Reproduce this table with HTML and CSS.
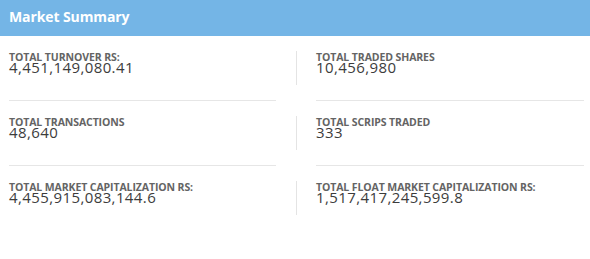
FILE: index.html
```html
<!DOCTYPE html>
<html>
<head>
<meta charset="utf-8">
<link rel="stylesheet" href="styles.css">
</head>
<body>
<div class="panel">
  <div class="panel-head">Market Summary</div>
  <div class="grid">
    <div class="cell">
      <div class="stat">
        <div class="label">TOTAL TURNOVER RS:</div>
        <div class="value">4,451,149,080.41</div>
      </div>
      <div class="sep"></div>
    </div>
    <div class="cell right">
      <div class="stat">
        <div class="label">TOTAL TRADED SHARES</div>
        <div class="value">10,456,980</div>
      </div>
      <div class="sep"></div>
    </div>
    <div class="cell">
      <div class="stat">
        <div class="label">TOTAL TRANSACTIONS</div>
        <div class="value">48,640</div>
      </div>
      <div class="sep"></div>
    </div>
    <div class="cell right">
      <div class="stat">
        <div class="label">TOTAL SCRIPS TRADED</div>
        <div class="value">333</div>
      </div>
      <div class="sep"></div>
    </div>
    <div class="cell">
      <div class="stat">
        <div class="label">TOTAL MARKET CAPITALIZATION RS:</div>
        <div class="value">4,455,915,083,144.6</div>
      </div>
    </div>
    <div class="cell right">
      <div class="stat">
        <div class="label">TOTAL FLOAT MARKET CAPITALIZATION RS:</div>
        <div class="value">1,517,417,245,599.8</div>
      </div>
    </div>
  </div>
</div>
</body>
</html>
```

FILE: styles.css
```css
html, body {
  margin: 0;
  padding: 0;
  background: #fff;
}
body {
  font-family: "Open Sans", "Liberation Sans", sans-serif;
  width: 590px;
  height: 259px;
  overflow: hidden;
}
.panel-head {
  height: 36px;
  background: #74b5e6;
  color: #fff;
  font-weight: 700;
  font-size: 14px;
  line-height: 34px;
  padding-left: 9px;
  letter-spacing: -0.1px;
}
.grid {
  display: grid;
  grid-template-columns: 287px 288px;
  padding: 15px 6px 0 9px;
}
.cell {
  padding-right: 20px;
}
.cell.right {
  padding-right: 0;
}
.stat {
  box-sizing: border-box;
  height: 34px;
  padding-top: 1px;
}
.cell.right .stat {
  border-left: 1px solid #e4e4e4;
  padding-left: 19px;
}
.sep {
  height: 0;
  border-top: 1px solid #e6e6e6;
  margin: 15px 0;
}
.cell.right .sep {
  margin-left: 20px;
}
.label {
  font-size: 10.5px;
  font-weight: 700;
  color: #646464;
  line-height: 10px;
  letter-spacing: -0.1px;
}
.value {
  font-size: 15px;
  color: #3c3c3c;
  line-height: 13px;
  margin-top: -1px;
  letter-spacing: 0.4px;
}
```
